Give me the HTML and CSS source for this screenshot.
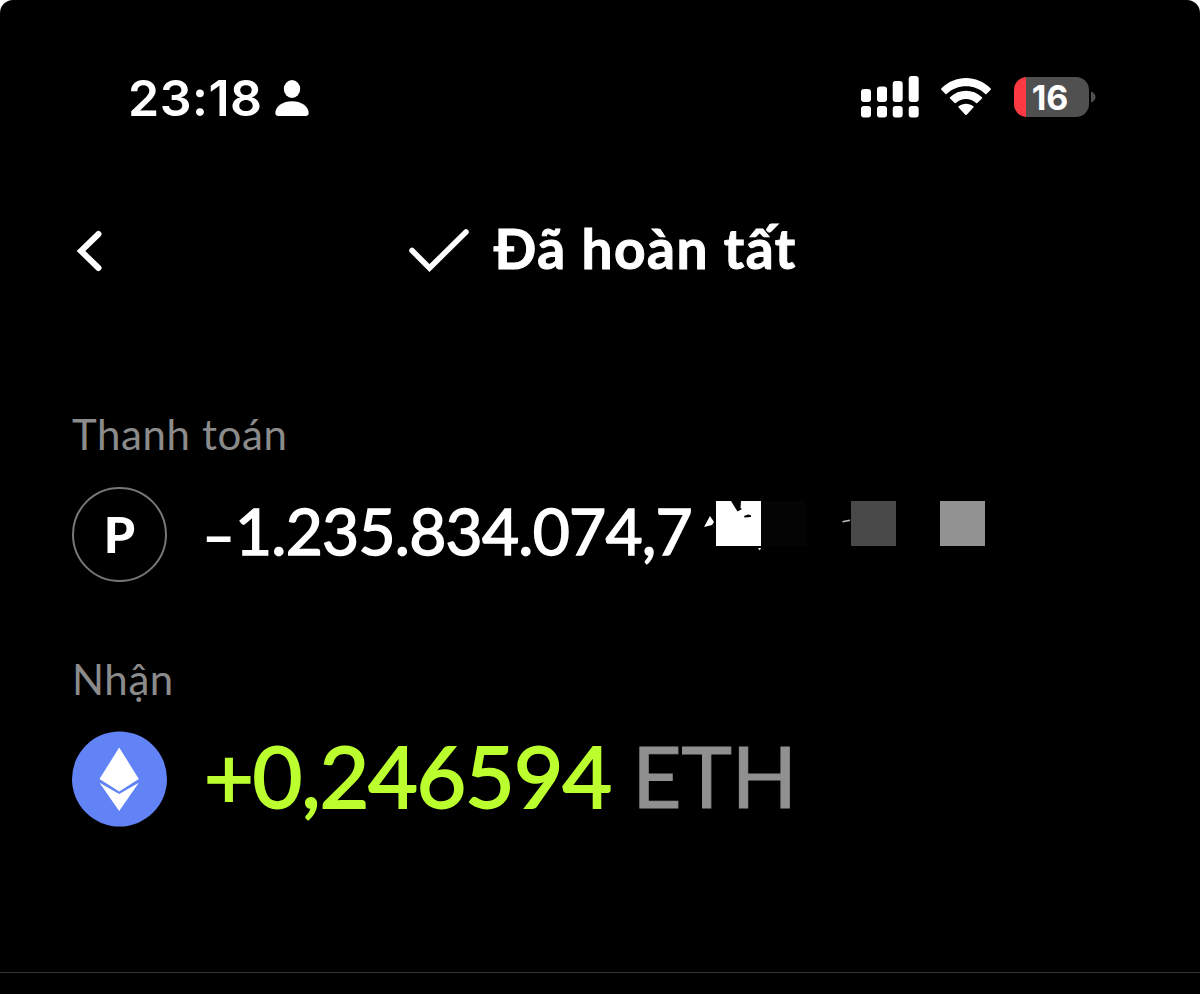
FILE: index.html
```
<!DOCTYPE html>
<html lang="vi">

<head>
    <meta charset="UTF-8">
    <meta name="viewport" content="width=device-width, initial-scale=1.0">
    <link rel="stylesheet" href="styles.css">
    <title>Đã hoàn tất</title>
</head>

<body>
    <div class="screen">
        <!-- Status bar -->
        <div class="status-bar">
            <span class="clock">23:18</span>
            <svg class="person" width="34" height="36" viewBox="0 0 34 36">
                <ellipse cx="17" cy="9" rx="8.2" ry="9"/>
                <path d="M3.5 36Q.3 36 .3 33C.5 26 8 21.2 17 21.2S33.500 26 33.700 33Q33.700 36 30.500 36Z"/>
            </svg>
            <div class="status-icons">
                <svg width="58" height="42" viewBox="0 0 58 42">
                    <rect x="0" y="13" width="10" height="13" rx="3"/>
                    <rect x="16" y="10.500" width="10" height="15.500" rx="3"/>
                    <rect x="31.700" y="5" width="10" height="21" rx="3"/>
                    <rect x="47.700" y="0" width="10" height="26" rx="3"/>
                    <rect x="0" y="30" width="10" height="11.500" rx="3"/>
                    <rect x="16" y="30" width="10" height="11.500" rx="3"/>
                    <rect x="31.700" y="30" width="10" height="11.500" rx="3"/>
                    <rect x="47.700" y="30" width="10" height="11.500" rx="3"/>
                </svg>
                <svg class="wifi" width="52" height="38" viewBox="0 0 52 38">
                    <path d="M1.300 10.500C15-3.500 37-3.500 50.700 10.500Q51.200 11.100 50.700 11.700L46.500 16Q46 16.500 45.400 16C34.500 5.700 17.500 5.700 6.600 16Q6 16.500 5.500 16L1.300 11.700Q.8 11.100 1.300 10.500Z"/>
                    <path d="M10 19.300C19 10.700 33 10.700 42 19.300Q42.500 19.900 42 20.500L37.300 25Q36.700 25.500 36.100 25C30.300 19.800 21.700 19.800 15.900 25Q15.300 25.500 14.700 25L10 20.500Q9.500 19.900 10 19.300Z"/>
                    <path d="M18.600 28.300C22.800 24.900 29.200 24.900 33.400 28.300Q34 28.900 33.400 29.500L26.700 36.700Q26 37.300 25.300 36.700L18.600 29.500Q18 28.900 18.600 28.300Z"/>
                </svg>
                <div class="battery">16</div>
                <svg class="battery-tip" width="5" height="14" viewBox="0 0 5 14">
                    <path d="M0 1.500Q4.500 3.500 4.500 7T0 12.500Z"/>
                </svg>
            </div>
        </div>

        <!-- Title -->
        <div class="header">
            <svg class="back" width="26" height="42" viewBox="0 0 26 42">
                <path d="M22.500 4L5 21L22.500 38"/>
            </svg>
            <svg class="check" width="60" height="46" viewBox="0 0 60 46">
                <path d="M3 22.500L20.500 40L57 4"/>
            </svg>
            <h1 class="title">Đã hoàn tất</h1>
        </div>

        <!-- Paid -->
        <p class="label">Thanh toán</p>
        <div class="row">
            <div class="coin coin-p">P</div>
            <span class="amount"><span class="sign">–</span>1.235.834.074,7</span>
            <svg class="mosaic" width="300" height="60" viewBox="0 0 300 60">
                <path class="white" d="M4 30L10 19L14 25L12 28Z"/>
                <rect class="white" x="16" y="4" width="45" height="45"/>
                <path class="black" d="M31 4H41L40.500 11L42 12L37.500 14.500ZM44 19L48 17.500L51 18.200L51 20L44.500 20.500Z"/>
                <path class="white" d="M58 51H61L59.700 53.500Z"/>
                <rect class="faint" x="61" y="4" width="45" height="45"/>
                <path class="dash" d="M142.500 24.800L150 23.200"/>
                <rect class="dark" x="151" y="4" width="45" height="45"/>
                <rect class="light" x="240" y="4" width="45" height="45"/>
            </svg>
        </div>

        <!-- Received -->
        <p class="label label-second">Nhận</p>
        <div class="row">
            <svg class="coin" width="96" height="96" viewBox="0 0 96 96">
                <circle cx="47.500" cy="48" r="47.500" fill="#6283f5"/>
                <path fill="#fff" d="M47.200 16.500L66.800 48L47.200 60.500L27.500 48Z"/>
                <path fill="#fff" d="M27.500 51.800L47.200 63L66.800 51.800L47.200 80Z"/>
            </svg>
            <span class="amount-big">+0,246594</span>
            <span class="unit">ETH</span>
        </div>

        <div class="divider"></div>
    </div>
</body>

</html>
```
FILE: styles.css
```
body {
    margin: 0;
    background-color: #fff;
}

.screen {
    box-sizing: border-box;
    width: 1200px;
    height: 994px;
    padding-top: 70px;
    overflow: hidden;
    background-color: #000;
    border-radius: 13px 13px 0 0;
    color: #fff;
    font-family: Lato, "Noto Sans", sans-serif;
    display: flex;
    flex-direction: column;
}

.screen svg {
    flex-shrink: 0;
    fill: #fff;
}

.status-bar {
    height: 54px;
    padding: 0 104px 0 128px;
    display: flex;
    align-items: center;
    font-family: Inter, sans-serif;
    font-weight: 600;
}

.clock {
    width: 147px;
    font-size: 50px;
    line-height: 54px;
    padding-top: 1px;
    letter-spacing: 0.5px;
}

.person {
    padding-top: 1px;
}

.status-icons {
    margin-left: auto;
    display: flex;
    align-items: center;
}

.wifi {
    margin-left: 21px;
}

.battery {
    box-sizing: border-box;
    width: 75px;
    height: 40px;
    margin-left: 22px;
    padding-right: 3px;
    border-radius: 13px;
    background: linear-gradient(to right, #fd3a41 12px, #505050 12px);
    font-size: 34px;
    line-height: 41px;
    text-align: center;
    font-weight: 700;
}

.screen .battery-tip {
    margin-left: 2px;
    fill: #505050;
}

.header {
    height: 60px;
    margin-top: 93px;
    padding-left: 76px;
    display: flex;
    align-items: center;
}

.screen .back,
.screen .check {
    fill: none;
    stroke: #fff;
    stroke-width: 5.5;
    stroke-linecap: round;
}

.screen .back {
    padding-top: 8px;
    stroke-width: 6;
}

.check {
    margin-left: 307px;
    padding-top: 7px;
}

.title {
    margin: 0 0 0 25px;
    padding-top: 2px;
    font-size: 55px;
    line-height: 60px;
    font-weight: 700;
    letter-spacing: 1.5px;
    -webkit-text-stroke: 1px #fff;
    white-space: nowrap;
}

.label {
    margin: 132px 0 0 72px;
    color: #8b8b8b;
    font-size: 42px;
    line-height: 50px;
    letter-spacing: 0.6px;
}

.label-second {
    margin-top: 72px;
}

.row {
    height: 96px;
    margin-top: 27px;
    padding-left: 72px;
    display: flex;
    align-items: center;
}

.coin {
    flex-shrink: 0;
}

.coin-p {
    box-sizing: border-box;
    width: 95px;
    height: 95px;
    border: 2px solid #777;
    border-radius: 50%;
    font-size: 50px;
    line-height: 91px;
    text-align: center;
    font-weight: 900;
}

.amount {
    width: 492px;
    margin-left: 36px;
    padding-bottom: 3px;
    font-size: 64px;
    line-height: 80px;
    letter-spacing: -0.75px;
    -webkit-text-stroke: 1.5px #fff;
    white-space: nowrap;
}

.sign {
    display: inline-block;
    width: 32px;
    font-size: 54px;
    -webkit-text-stroke: 2px #fff;
}

.mosaic {
    margin-left: 5px;
    padding-bottom: 14px;
}

.mosaic .black {
    fill: #000;
}

.mosaic .faint {
    fill: #040404;
}

.mosaic .dash {
    stroke: #bbb;
    stroke-width: 1.5;
}

.mosaic .dark {
    fill: #494949;
}

.mosaic .light {
    fill: #929292;
}

.amount-big,
.unit {
    padding-bottom: 9px;
    font-size: 86px;
    line-height: 96px;
}

.amount-big {
    width: 428px;
    margin-left: 36px;
    color: #bcff2f;
    letter-spacing: -1.3px;
    -webkit-text-stroke: 1.8px #bcff2f;
}

.unit {
    color: #909090;
    letter-spacing: -0.5px;
    -webkit-text-stroke: 1px #909090;
}

.divider {
    height: 1px;
    margin-top: 145px;
    background-color: #333;
}
```
